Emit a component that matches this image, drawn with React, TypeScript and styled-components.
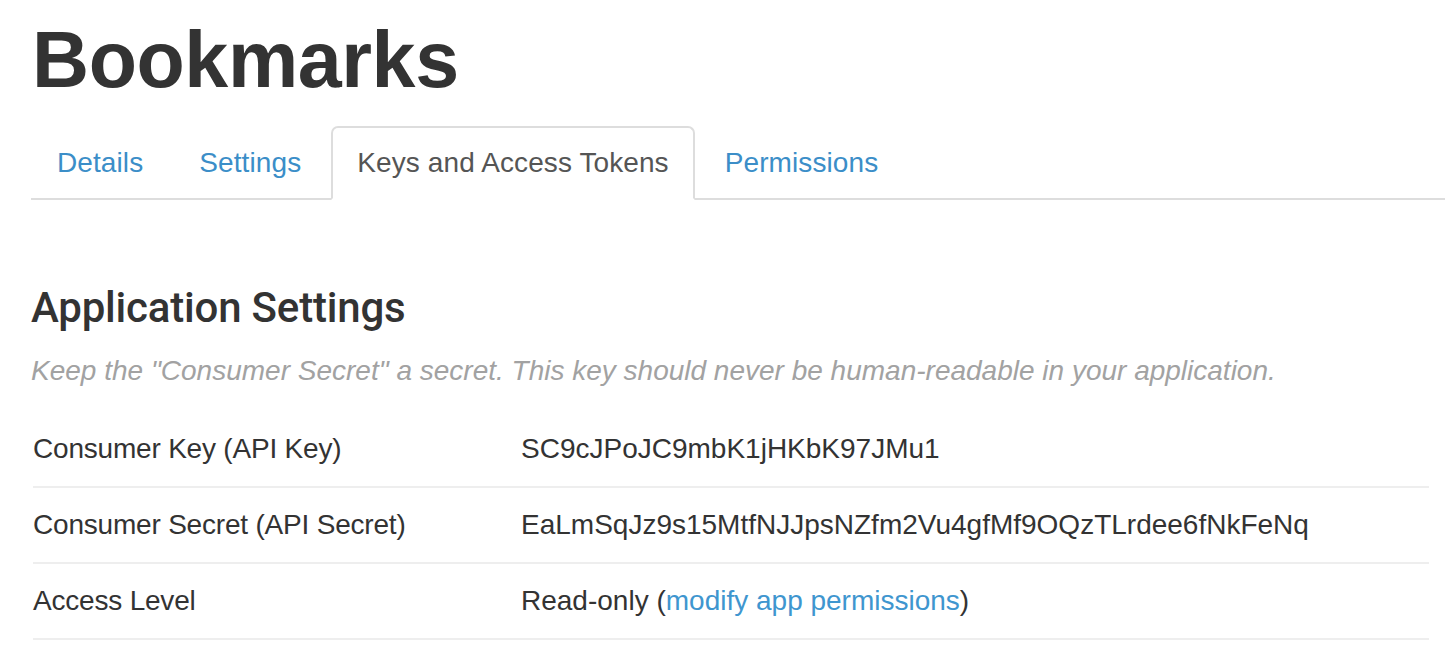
import React from "react";
import styled, { createGlobalStyle } from "styled-components";

const GlobalStyle = createGlobalStyle`
  html, body {
    margin: 0;
    padding: 0;
    background: #ffffff;
  }
  body {
    font-family: "Liberation Sans", Arial, Helvetica, sans-serif;
    color: #333333;
    overflow: hidden;
  }
`;

const Page = styled.div`
  padding-left: 31px;
  width: 1445px;
  box-sizing: border-box;
`;

const Title = styled.h1`
  margin: 20px 0 0 1px;
  font-family: "Liberation Sans", Arial, sans-serif;
  font-weight: 700;
  font-size: 79px;
  line-height: 79px;
  color: #333333;
  letter-spacing: -0.4px;
`;

const TabList = styled.ul`
  display: flex;
  list-style: none;
  margin: 27px 0 0 0;
  padding: 0;
  border-bottom: 2px solid #dddddd;
`;

const TabItem = styled.li`
  margin: 0 4px -2px 0;
`;

const TabLink = styled.a<{ $active?: boolean }>`
  display: flex;
  align-items: center;
  box-sizing: border-box;
  height: 74px;
  padding: 0 24px;
  border: 2px solid ${(p) => (p.$active ? "#dddddd" : "transparent")};
  border-bottom-color: ${(p) => (p.$active ? "#ffffff" : "transparent")};
  border-radius: 7px 7px 0 0;
  background: ${(p) => (p.$active ? "#ffffff" : "transparent")};
  font-size: 28px;
  line-height: 28px;
  letter-spacing: 0.1px;
  color: ${(p) => (p.$active ? "#555555" : "#3b8ec8")};
  text-decoration: none;
  cursor: pointer;
  white-space: nowrap;
`;

const SectionTitle = styled.h2`
  margin: 87px 0 0 0;
  font-family: Roboto, "Liberation Sans", sans-serif;
  font-weight: 500;
  font-size: 42px;
  line-height: 42px;
  color: #333333;
  letter-spacing: -0.2px;
`;

const Description = styled.p`
  margin: 22px 0 0 0;
  font-style: italic;
  font-size: 28px;
  line-height: 40px;
  color: #a2a2a2;
`;

const Table = styled.div`
  margin: 21px 16px 0 2px;
  display: flex;
  flex-direction: column;
`;

const Row = styled.div`
  display: grid;
  grid-template-columns: 488px 1fr;
  align-items: center;
  height: 76px;
  box-sizing: border-box;
  border-bottom: 2px solid #eeeeee;
  font-size: 28px;
  color: #333333;
`;

const Label = styled.div`
  white-space: nowrap;
  letter-spacing: -0.2px;
`;

const Value = styled.div`
  white-space: nowrap;
`;

const Link = styled.a`
  color: #3f96cf;
  text-decoration: none;
`;

const tabs = ["Details", "Settings", "Keys and Access Tokens", "Permissions"];

export default function App() {
  return (
    <>
      <GlobalStyle />
      <Page>
        <Title>Bookmarks</Title>
        <TabList>
          {tabs.map((t) => (
            <TabItem key={t}>
              <TabLink $active={t === "Keys and Access Tokens"}>{t}</TabLink>
            </TabItem>
          ))}
        </TabList>
        <SectionTitle>Application Settings</SectionTitle>
        <Description>
          Keep the "Consumer Secret" a secret. This key should never be human-readable in your
          application.
        </Description>
        <Table>
          <Row>
            <Label>Consumer Key (API Key)</Label>
            <Value>SC9cJPoJC9mbK1jHKbK97JMu1</Value>
          </Row>
          <Row>
            <Label>Consumer Secret (API Secret)</Label>
            <Value>EaLmSqJz9s15MtfNJJpsNZfm2Vu4gfMf9OQzTLrdee6fNkFeNq</Value>
          </Row>
          <Row>
            <Label>Access Level</Label>
            <Value>
              Read-only (<Link>modify app permissions</Link>)
            </Value>
          </Row>
        </Table>
      </Page>
    </>
  );
}
